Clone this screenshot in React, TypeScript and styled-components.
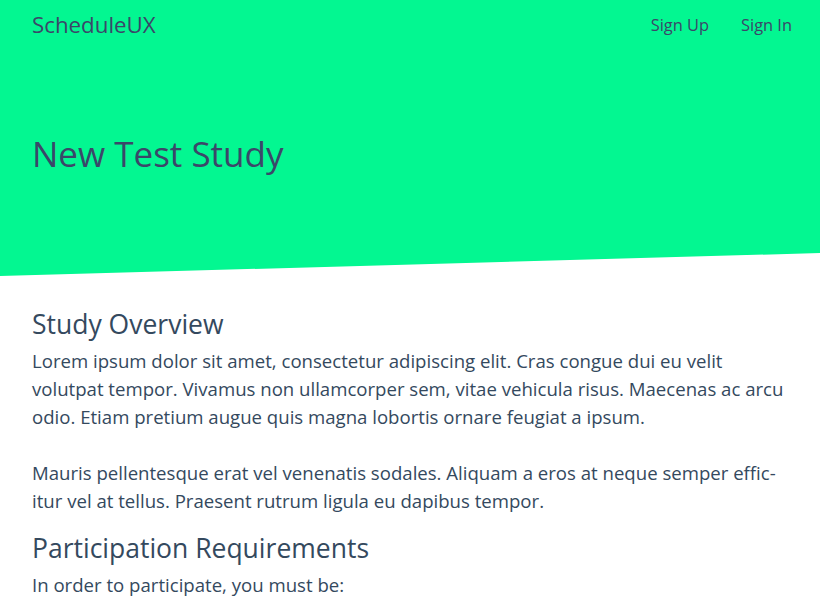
import React from "react";
import styled, { createGlobalStyle } from "styled-components";

const GlobalStyle = createGlobalStyle`
  html, body {
    margin: 0;
    padding: 0;
    background: #ffffff;
  }
  body {
    font-family: "Open Sans", "Noto Sans", sans-serif;
    color: #34495e;
  }
`;

const Hero = styled.header`
  background: #03f791;
  height: 276px;
  clip-path: polygon(0 0, 100% 0, 100% 253px, 0 100%);
  color: #3b4769;
`;

const Nav = styled.nav`
  display: flex;
  justify-content: space-between;
  align-items: center;
  padding: 10px 28px 0 32px;
`;

const Brand = styled.a`
  font-size: 22.3px;
  font-weight: 400;
  line-height: 30px;
  color: inherit;
  text-decoration: none;
`;

const NavLinks = styled.div`
  display: flex;
  gap: 32px;
`;

const NavLink = styled.a`
  font-size: 16.4px;
  font-weight: 400;
  line-height: 30px;
  color: inherit;
  text-decoration: none;
`;

const Title = styled.h1`
  margin: 92px 0 0 32px;
  font-size: 35px;
  font-weight: 400;
  line-height: 44px;
`;

const Content = styled.main`
  padding: 28px 32px 0 32px;
`;

const SectionTitle = styled.h2`
  margin: 0;
  font-size: 26.5px;
  font-weight: 400;
  line-height: 40px;
`;

const Paragraph = styled.p`
  margin: 3px 0 28px 0;
  font-size: 18.6px;
  line-height: 28px;

  &:last-of-type {
    margin-bottom: 13px;
  }
`;

const App: React.FC = () => {
  return (
    <>
      <GlobalStyle />
      <Hero>
        <Nav>
          <Brand href="#">ScheduleUX</Brand>
          <NavLinks>
            <NavLink href="#">Sign Up</NavLink>
            <NavLink href="#">Sign In</NavLink>
          </NavLinks>
        </Nav>
        <Title>New Test Study</Title>
      </Hero>
      <Content>
        <section>
          <SectionTitle>Study Overview</SectionTitle>
          <Paragraph>
            Lorem ipsum dolor sit amet, consectetur adipiscing elit. Cras congue
            dui eu velit volutpat tempor. Vivamus non ullamcorper sem, vitae
            vehicula risus. Maecenas ac arcu odio. Etiam pretium augue quis
            magna lobortis ornare feugiat a ipsum.
          </Paragraph>
          <Paragraph>
            Mauris pellentesque erat vel venenatis sodales. Aliquam a eros at
            neque semper effic{"\u00AD"}itur vel at tellus. Praesent rutrum
            ligula eu dapibus tempor.
          </Paragraph>
        </section>
        <section>
          <SectionTitle>Participation Requirements</SectionTitle>
          <Paragraph>In order to participate, you must be:</Paragraph>
        </section>
      </Content>
    </>
  );
};

export default App;
